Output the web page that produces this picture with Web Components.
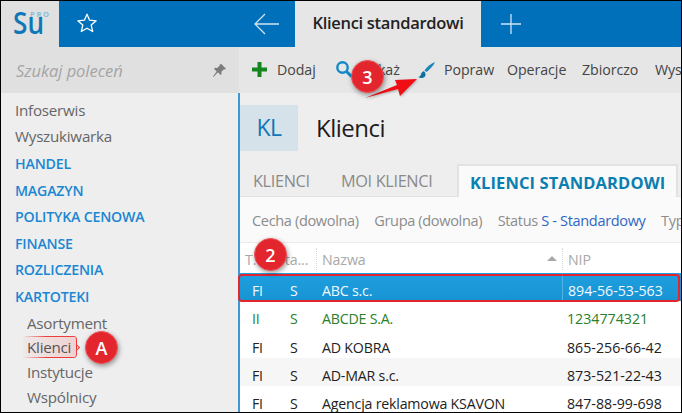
<!DOCTYPE html>
<html lang="pl">
<head>
<meta charset="utf-8">
<title>Klienci standardowi</title>
<style>
html, body { margin: 0; height: 100%; overflow: hidden; }
body { font-family: "Open Sans", "Noto Sans", sans-serif; }
</style>
</head>
<body>
<su-app></su-app>
<script>
class SuSidebar extends HTMLElement {
    constructor() {
        super();
        this.attachShadow({mode: 'open'});
        const top = ['Infoserwis', 'Wyszukiwarka'];
        const groups = ['HANDEL', 'MAGAZYN', 'POLITYKA CENOWA', 'FINANSE', 'ROZLICZENIA', 'KARTOTEKI'];
        const subs = ['Asortyment', 'Klienci', 'Instytucje', 'Wspólnicy'];
        this.shadowRoot.innerHTML = `
            <style>
                :host { display: flex; flex-direction: column; width: 238px; flex: none; background: #eeeeee; overflow: hidden; }
                .head { display: flex; height: 46px; flex: none; }
                .logo { width: 58px; background: #e0e0e0; padding: 9px 0 0 12px; box-sizing: border-box; }
                .logo svg { display: block; overflow: visible; }
                .fav { flex: 1; background: #0070bb; padding: 11px 0 0 17px; }
                .search { height: 46px; flex: none; background: #e0e0e0; display: flex; align-items: center; justify-content: space-between; padding: 0 12px 0 15px; font: italic 16.5px "Open Sans", sans-serif; letter-spacing: -.05px; color: #a5a5a5; }
                nav { position: relative; z-index: 0; padding-top: 5px; display: flex; flex-direction: column; font-size: 15.2px; line-height: 25.5px; color: #666; letter-spacing: -.25px; }
                .item { padding-left: 14px; }
                .group { color: #1b87d2; font-weight: 600; font-size: 14.2px; letter-spacing: -.2px; line-height: 26.6px; }
                .top + .group { margin-top: 2px; }
                .item.sub { padding-left: 26px; line-height: 24.7px; }
                .on span { position: relative; display: inline-block; line-height: 22px; color: #555; }
                .on span::before { content: ''; position: absolute; left: -4px; right: -6px; top: 0; bottom: 0; z-index: -1; border-right: 1.5px solid #ee3b3b; border-radius: 0 4px 4px 0;
                    background:
                        linear-gradient(90deg, rgba(238,59,59,0), #ee3b3b 45%) top / 100% 1px no-repeat,
                        linear-gradient(90deg, rgba(238,59,59,0), #ee3b3b 45%) bottom / 100% 1px no-repeat,
                        linear-gradient(90deg, rgba(240,200,200,.15), rgba(240,190,190,.6)); }
                .on span::after { content: ''; position: absolute; right: -8px; top: 9px; width: 4px; height: 4px; border: solid #ee3b3b; border-width: 1.5px 1.5px 0 0; transform: rotate(45deg); }
            </style>
            <div class="head">
                <div class="logo">
                    <svg width="38" height="26" viewBox="0 0 38 26">
                        <text x="0" y="23.500" font-family="Open Sans" font-size="30" font-weight="600" fill="#0f76b8" textLength="31" lengthAdjust="spacingAndGlyphs">Su</text>
                        <text x="17" y="7" font-family="Open Sans" font-size="7.500" font-weight="700" fill="#8bbcdc" textLength="19">PRO</text>
                    </svg>
                </div>
                <div class="fav">
                    <svg width="22" height="22" viewBox="0 0 22 22"><path d="M11 2.200l2.600 6 6.600.6-5 4.300 1.500 6.400L11 16.200l-5.700 3.300 1.500-6.400-5-4.300 6.600-.6z" fill="none" stroke="#fff" stroke-width="1.300" stroke-linejoin="round"/></svg>
                </div>
            </div>
            <div class="search">
                <span>Szukaj poleceń</span>
                <svg width="15" height="15" viewBox="0 0 15 15"><path d="M9.300 1l4.700 4.700-1 .7-1-.2-2.600 2.600.2 2.200-1 1-2.700-2.700L1.500 14 1 13.500 4.600 8.400 2 5.800l1-1 2.200.2 2.600-2.600-.2-1z" fill="#7c7c7c"/></svg>
            </div>
            <nav>
                ${top.map(t => `<div class="item top">${t}</div>`).join('')}
                ${groups.map(t => `<div class="item group">${t}</div>`).join('')}
                ${subs.map(t => `<div class="item sub${t === 'Klienci' ? ' on' : ''}"><span>${t}</span></div>`).join('')}
            </nav>
        `;
    }
}
customElements.define('su-sidebar', SuSidebar);

class SuTopbar extends HTMLElement {
    constructor() {
        super();
        this.attachShadow({mode: 'open'});
        this.shadowRoot.innerHTML = `
            <style>
                :host { display: flex; height: 46px; flex: none; background: #0070bb; }
                .back { width: 56px; padding: 11px 0 0 14px; box-sizing: border-box; }
                .tab { width: 186px; background: #e6e6e6; color: #222; font-size: 16.5px; font-weight: 600; letter-spacing: -.3px; text-align: center; line-height: 44px; }
                .add { padding: 11px 0 0 19px; }
            </style>
            <div class="back"><svg width="28" height="24" viewBox="0 0 28 24"><path d="M26 12H2M12 2L2 12l10 10" fill="none" stroke="#cfe3f3" stroke-width="1.300"/></svg></div>
            <div class="tab">Klienci standardowi</div>
            <div class="add"><svg width="22" height="24" viewBox="0 0 22 24"><path d="M11 2v20M1 12h20" fill="none" stroke="#cfe3f3" stroke-width="1.300"/></svg></div>
        `;
    }
}
customElements.define('su-topbar', SuTopbar);

class SuToolbar extends HTMLElement {
    constructor() {
        super();
        this.attachShadow({mode: 'open'});
        this.shadowRoot.innerHTML = `
            <style>
                :host { display: flex; align-items: center; height: 46px; flex: none; background: #e6e6e6; color: #444; font-size: 14.200px; letter-spacing: -.05px; padding: 0 0 2px 12px; box-sizing: border-box; white-space: nowrap; overflow: hidden; }
                .b { display: flex; align-items: center; flex: none; }
                svg { display: block; flex: none; }
            </style>
            <div class="b" style="gap:9px;width:84px">
                <svg width="17" height="17" viewBox="0 0 17 17"><path d="M8.500 1v15M1 8.500h15" stroke="#14851f" stroke-width="4" fill="none"/></svg>
                <span>Dodaj</span>
            </div>
            <div class="b" style="gap:8px;width:81px">
                <svg width="18" height="18" viewBox="0 0 18 18"><circle cx="7.500" cy="7.500" r="5.200" fill="none" stroke="#1289c6" stroke-width="2.400"/><path d="M11.500 11.500L16.500 16.500" stroke="#1289c6" stroke-width="3"/></svg>
                <span>Pokaż</span>
            </div>
            <div class="b" style="gap:8px;width:91px">
                <svg width="20" height="20" viewBox="0 0 20 20" style="margin-top:3px"><path d="M19 1C15 2.500 10.500 6 8.500 9.500l2 1.500C13.500 8.500 17.500 5 19 1z" fill="#1b86b8"/><path d="M7.800 10.300c-2.600.5-2.400 3-3.300 4.300-.5.800-1.300 1.100-2.300 1.300 2 1.600 5.700 1.300 7-1 .8-1.500.3-3.300-1.400-4.600z" fill="#0f6f9f"/></svg>
                <span>Popraw</span>
            </div>
            <div class="b" style="width:75px">Operacje</div>
            <div class="b" style="width:73px">Zbiorczo</div>
            <div class="b">Wyszukaj</div>
        `;
    }
}
customElements.define('su-toolbar', SuToolbar);

class SuHeader extends HTMLElement {
    constructor() {
        super();
        this.attachShadow({mode: 'open'});
        this.shadowRoot.innerHTML = `
            <style>
                :host { display: flex; align-items: center; gap: 18px; height: 46px; flex: none; margin: 12px 0 13px; }
                .kl { width: 58px; height: 46px; background: #d6e2ea; color: #0f76b8; font-size: 23px; font-weight: 500; letter-spacing: -.5px; text-align: center; line-height: 44px; }
                .t { font-size: 24px; color: #1c1c1c; letter-spacing: -.5px; line-height: 44px; }
            </style>
            <div class="kl">KL</div><div class="t">Klienci</div>
        `;
    }
}
customElements.define('su-header', SuHeader);

class SuTabs extends HTMLElement {
    constructor() {
        super();
        this.attachShadow({mode: 'open'});
        this.shadowRoot.innerHTML = `
            <style>
                :host { display: flex; height: 33px; flex: none; font-size: 16.300px; color: #8a8a8a; letter-spacing: -.35px; border-bottom: 1px solid #e2e2e2; box-sizing: border-box; white-space: nowrap; }
                div { line-height: 34px; }
                .a { margin-left: 13px; width: 88px; }
                .b { width: 116px; }
                .on { background: #fafafa; border: 2px solid #e2e2e2; border-bottom: 0; height: 33px; line-height: 34px; box-sizing: border-box; width: 221px; padding-left: 11px; color: #0a7fb0; font-weight: 700; font-size: 16.500px; letter-spacing: .1px; }
            </style>
            <div class="a">KLIENCI</div><div class="b">MOI KLIENCI</div><div class="on">KLIENCI STANDARDOWI</div>
        `;
    }
}
customElements.define('su-tabs', SuTabs);

class SuFilters extends HTMLElement {
    constructor() {
        super();
        this.attachShadow({mode: 'open'});
        this.shadowRoot.innerHTML = `
            <style>
                :host { display: flex; height: 46px; flex: none; align-items: center; gap: 15.500px; padding: 0 0 0 12px; box-sizing: border-box; background: #fafafa; color: #8c8c8c; font-size: 14.550px; letter-spacing: -.35px; white-space: nowrap; overflow: hidden; border-bottom: 1px solid #ececec; }
                b { font-weight: 400; color: #2f66c4; }
            </style>
            <span>Cecha (dowolna)</span><span>Grupa (dowolna)</span><span>Status <b>S - Standardowy</b></span><span>Typ</span>
        `;
    }
}
customElements.define('su-filters', SuFilters);

class SuRow extends HTMLElement {
    constructor() {
        super();
        this.attachShadow({mode: 'open'});
        const [a, b, c, d] = (this.getAttribute('cells') || '').split('|');
        this.shadowRoot.innerHTML = `
            <style>
                :host { display: grid; grid-template-columns: 39px 43px 240px 1fr; height: 28.300px; line-height: 35px; font-size: 14.200px; letter-spacing: -.2px; white-space: nowrap; color: #222; background: #fff; overflow: hidden; }
                :host([alt]) { background: #f6f6f6; }
                :host([green]) { color: #2a7f2a; }
                :host([selected]) { background: linear-gradient(#1fa0e0, #1793d3); color: #f2f9ff; }
                .f { padding-left: 12px; }
                .s { padding-left: 11px; }
                .p { padding-left: 5px; letter-spacing: 0; }
                :host([selected]) .p { border-left: 1px solid #4fb3e6; }
            </style>
            <div class="f">${a}</div><div class="s">${b}</div><div>${c}</div><div class="p">${d}</div>
        `;
    }
}
customElements.define('su-row', SuRow);

class SuGrid extends HTMLElement {
    constructor() {
        super();
        this.attachShadow({mode: 'open'});
        this.shadowRoot.innerHTML = `
            <style>
                :host { display: block; background: #fff; flex: 1; overflow: hidden; }
                .h { display: grid; grid-template-columns: 39px 43px 240px 1fr; height: 30px; font-size: 14.200px; color: #a8a8a8; letter-spacing: -.1px; white-space: nowrap; }
                .h > div { height: 22px; margin-top: 5px; line-height: 23px; }
                .t { padding-left: 5px; }
                .st { padding-left: 0; margin-left: -2px; }
                .name { margin-left: -6px; padding: 0 5px; border-left: 1px dotted #d8d8d8; display: flex; justify-content: space-between; }
                .d { border-left: 1px dotted #d8d8d8; padding-left: 5px; }
                .tri { width: 0; height: 0; border: 5px solid transparent; border-top: 0; border-bottom: 5px solid #a8a8a8; margin-top: 8px; }
            </style>
            <div class="h">
                <div class="t">T.</div><div class="st">Sta...</div>
                <div class="name"><span>Nazwa</span><span class="tri"></span></div>
                <div class="d">NIP</div>
            </div>
            <slot></slot>
        `;
    }
}
customElements.define('su-grid', SuGrid);

class SuBadge extends HTMLElement {
    constructor() {
        super();
        this.attachShadow({mode: 'open'});
        this.shadowRoot.innerHTML = `
            <style>
                :host { position: absolute; display: flex; width: 33px; height: 33px; border-radius: 50%; align-items: center; justify-content: center; background: #e3262e; color: #fff; font: 600 18px "Open Sans", sans-serif; box-shadow: 1px 2px 5px rgba(0,0,0,.4); border: 1px solid #f05055; box-sizing: border-box; z-index: 5; }
            </style>
            <slot></slot>
        `;
    }
}
customElements.define('su-badge', SuBadge);

class SuApp extends HTMLElement {
    constructor() {
        super();
        this.attachShadow({mode: 'open'});
        this.shadowRoot.innerHTML = `
            <style>
                :host { display: block; position: relative; width: 682px; height: 413px; box-sizing: border-box; border: solid #000; border-width: 1px 0 1px 1px; overflow: hidden; }
                .wrap { display: flex; height: 100%; }
                main { flex: 1; min-width: 0; display: flex; flex-direction: column; background: #eeeeee; }
                .body { flex: 1; min-height: 0; display: flex; flex-direction: column; border-left: 2px solid #3f97d3; margin-left: -1px; }
                .edge { position: absolute; right: 0; top: 0; bottom: 0; width: 1px; background: #000; z-index: 9; }
                .box { position: absolute; left: 237px; top: 273px; width: 442px; height: 28px; border: 2px solid #e3262e; border-radius: 4px; box-sizing: border-box; z-index: 4; }
                .arrow { position: absolute; left: 359px; top: 59px; z-index: 4; filter: drop-shadow(1px 1px 1px rgba(0,0,0,.25)); }
            </style>
            <div class="wrap">
                <su-sidebar></su-sidebar>
                <main>
                    <su-topbar></su-topbar>
                    <su-toolbar></su-toolbar>
                    <div class="body">
                        <su-header></su-header>
                        <su-tabs></su-tabs>
                        <su-filters></su-filters>
                        <su-grid>
                            <su-row selected cells="FI|S|ABC s.c.|894-56-53-563"></su-row>
                            <su-row green cells="II|S|ABCDE S.A.|1234774321"></su-row>
                            <su-row cells="FI|S|AD KOBRA|865-256-66-42"></su-row>
                            <su-row alt cells="FI|S|AD-MAR s.c.|873-521-22-43"></su-row>
                            <su-row cells="FI|S|Agencja reklamowa KSAVON|847-88-99-698"></su-row>
                        </su-grid>
                    </div>
                </main>
            </div>
            <div class="edge"></div>
            <div class="box"></div>
            <svg class="arrow" width="62" height="42" viewBox="0 0 62 42"><path d="M5 38L37 25 35 20 57 19 40 36 38 29z" fill="#f00d14"/></svg>
            <su-badge style="left:84px;top:330px">A</su-badge>
            <su-badge style="left:253px;top:237px">2</su-badge>
            <su-badge style="left:350px;top:59px">3</su-badge>
        `;
    }
}
customElements.define('su-app', SuApp);
</script>
</body>
</html>
